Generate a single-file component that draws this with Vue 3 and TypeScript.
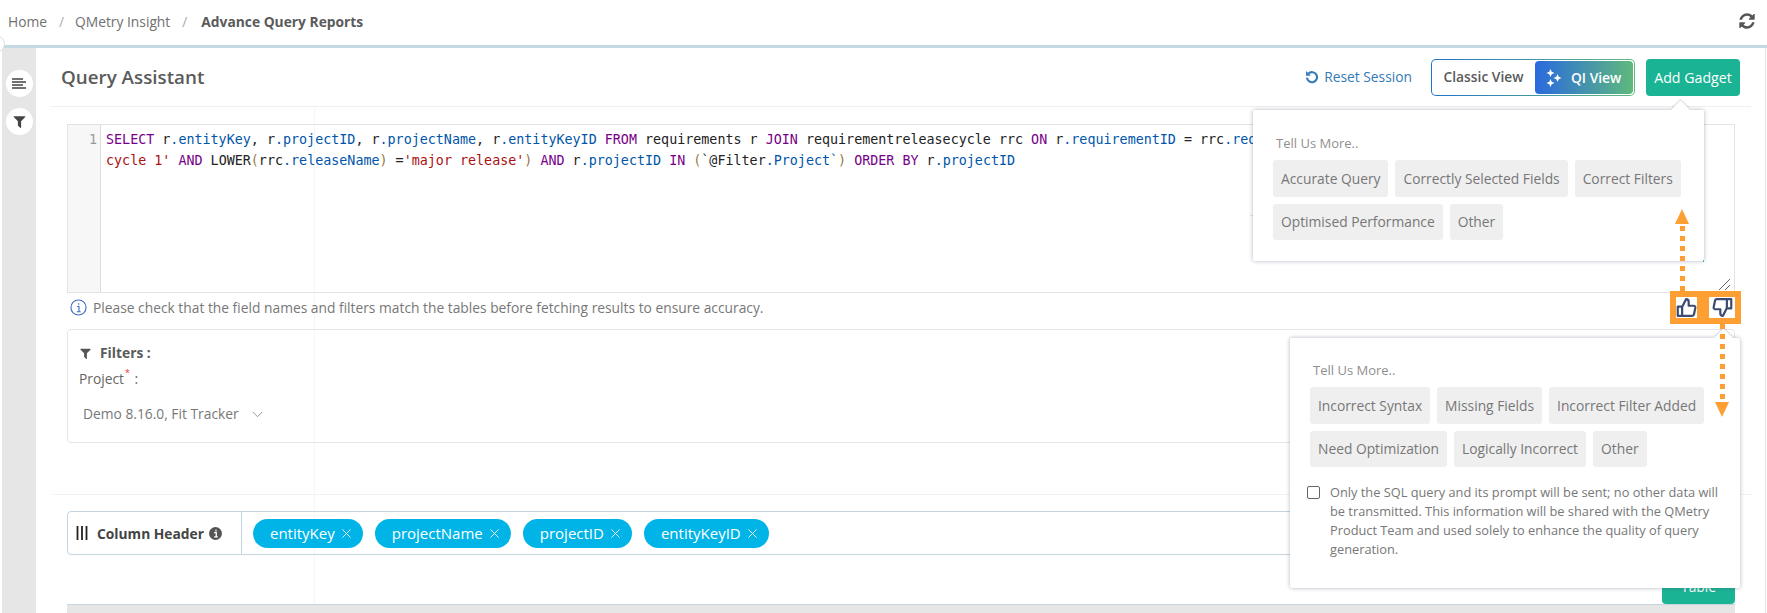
<script setup lang="ts">
type Tok = { t: string; c: string }
const k = (t: string): Tok => ({ t, c: 'kw' })
const v = (t: string): Tok => ({ t, c: 'prop' })
const n = (t: string): Tok => ({ t, c: 'plain' })
const s = (t: string): Tok => ({ t, c: 'str' })
const b = (t: string): Tok => ({ t, c: 'brk' })

const line1: Tok[] = [
  k('SELECT'), n(' r'), v('.entityKey'), n(', r'), v('.projectID'), n(', r'), v('.projectName'), n(', r'), v('.entityKeyID'),
  n(' '), k('FROM'), n(' requirements r '), k('JOIN'), n(' requirementreleasecycle rrc '), k('ON'), n(' r'), v('.requirementID'),
  n(' = rrc'), v('.requirementID'), n(' '), k('WHERE'), n(' (LOWER(rrc'), v('.cycleName'), n(') ='), s("'test")
]
const line2: Tok[] = [
  s("cycle 1'"), n(' '), k('AND'), n(' LOWER'), b('('), n('rrc'), v('.releaseName'), b(')'), n(' ='), s("'major release'"), b(')'),
  n(' '), k('AND'), n(' r'), v('.projectID'), n(' '), k('IN'), n(' '), b('('), n('`@Filter'), v('.Project`'), b(')'), n(' '), k('ORDER'), n(' '), k('BY'), n(' r'), v('.projectID')
]
const columns = ['entityKey', 'projectName', 'projectID', 'entityKeyID']
const upRows = [['Accurate Query', 'Correctly Selected Fields', 'Correct Filters'], ['Optimised Performance', 'Other']]
const downRows = [['Incorrect Syntax', 'Missing Fields', 'Incorrect Filter Added'], ['Need Optimization', 'Logically Incorrect', 'Other']]
const filterPath = 'M1595 295q17 41-14 70l-493 493v742q0 42-39 59-13 5-25 5-27 0-45-19l-256-256q-19-19-19-45v-486l-493-493q-31-29-14-70 17-39 59-39h1280q42 0 59 39z'
</script>

<template>
  <div class="page">
    <span class="edge-knob"></span>
    <nav class="crumbs">
      <span>Home</span><i>/</i><span>QMetry Insight</span><i>/</i><b>Advance Query Reports</b>
      <svg class="refresh" viewBox="0 0 1792 1792"><path fill="#555" d="M1639 1056q0 5-1 7-64 268-268 434.5t-478 166.5q-146 0-282.5-55t-243.5-157l-129 129q-19 19-45 19t-45-19-19-45v-448q0-26 19-45t45-19h448q26 0 45 19t19 45-19 45l-137 137q71 66 161 102t187 36q134 0 250-65t186-179q11-17 53-117 8-23 30-23h192q13 0 22.5 9.5t9.5 22.5zm25-800v448q0 26-19 45t-45 19h-448q-26 0-45-19t-19-45 19-45l138-138q-148-137-349-137-134 0-250 65t-186 179q-11 17-53 117-8 23-30 23h-199q-13 0-22.5-9.5t-9.5-22.5v-7q65-268 270-434.5t480-166.5q146 0 284 55.5t245 156.5l130-129q19-19 45-19t45 19 19 45z"/></svg>
    </nav>

    <div class="body">
      <aside class="rail">
        <span class="rail-btn">
          <svg viewBox="0 0 14 12" width="14" height="12"><path d="M0 1h11M0 4h14M0 7h11M0 10h14" stroke="#444" stroke-width="1.6"/></svg>
        </span>
        <span class="rail-btn">
          <svg viewBox="0 0 1792 1792" width="15" height="15"><path fill="#444" :d="filterPath"/></svg>
        </span>
      </aside>

      <main class="main">
        <span class="guide"></span>
        <header class="head">
          <h1>Query Assistant</h1>
          <a class="reset">
            <svg viewBox="0 0 16 16" width="14" height="14"><path d="M4 4A5.800 5.800 0 1 1 2.200 8.800" fill="none" stroke="#337ab7" stroke-width="2.400"/><path d="M1.200 1v5.600h5.600z" fill="#337ab7"/></svg>
            Reset Session
          </a>
          <div class="toggle">
            <span class="classic">Classic View</span>
            <span class="qi">
              <svg viewBox="0 0 16 18" width="16" height="18"><path fill="#fff" d="M4.500 0l1.200 2.800L8.500 4 5.700 5.200 4.500 8 3.300 5.200.5 4l2.800-1.200zM11.500 5l1.200 2.800L15.500 9l-2.800 1.200L11.500 13l-1.200-2.800L7.500 9l2.800-1.200zM4.500 10l1.200 2.800L8.500 14l-2.800 1.200L4.500 18l-1.200-2.800L.5 14l2.800-1.200z"/></svg>
              QI View
            </span>
          </div>
          <button class="add">Add Gadget</button>
        </header>

        <section class="content">
          <div class="editor">
            <div class="gutter">1</div>
            <pre class="code"><span v-for="(x, i) in line1" :key="'a' + i" :class="x.c">{{ x.t }}</span>
<span v-for="(x, i) in line2" :key="'b' + i" :class="x.c">{{ x.t }}</span></pre>
            <div class="prompt-back"></div>
            <svg class="grip" viewBox="0 0 12 11" width="12" height="11"><path d="M0 11L11 0M6 11l5-5" stroke="#666" fill="none"/></svg>
          </div>

          <div class="notice">
            <svg viewBox="0 0 18 18" width="17" height="17"><circle cx="9" cy="9" r="8" fill="none" stroke="#3f6fc0" stroke-width="1.200"/><path d="M7.500 8h2v5.500M7.200 13.500h4.200M9.200 4.600v1.600" fill="none" stroke="#3f6fc0" stroke-width="1.200"/></svg>
            <span>Please check that the field names and filters match the tables before fetching results to ensure accuracy.</span>
          </div>

          <div class="filters">
            <div class="f-title">
              <svg viewBox="0 0 1792 1792" width="13" height="13"><path fill="#555" :d="filterPath"/></svg>
              Filters :
            </div>
            <div class="f-label">Project<sup>*</sup> :</div>
            <div class="f-select">
              Demo 8.16.0, Fit Tracker
              <svg viewBox="0 0 12 8" width="11" height="7"><path d="M.5 1l5.500 5.500L11.500 1" fill="none" stroke="#888"/></svg>
            </div>
          </div>
        </section>

        <div class="rule"></div>

        <section class="content lower">
          <div class="colbox">
            <div class="col-label">
              <svg viewBox="0 0 12 14" width="12" height="14"><path d="M1.500 0v14M6 0v14M10.500 0v14" stroke="#222" stroke-width="1.800"/></svg>
              <b>Column Header</b>
              <svg viewBox="0 0 14 14" width="13" height="13"><circle cx="7" cy="7" r="7" fill="#555"/><path d="M5.500 6h2.300v4.500M5.500 10.700h4M7.500 3v1.800" stroke="#fff" stroke-width="1.400" fill="none"/></svg>
            </div>
            <div class="col-tags">
              <span v-for="c in columns" :key="c" class="tag">{{ c }}<svg viewBox="0 0 10 10" width="9" height="9"><path d="M.5.5l9 9M9.500.5l-9 9" stroke="#fff" stroke-width="1"/></svg></span>
            </div>
          </div>
          <div class="table-actions">
            <button class="table-btn">Table</button>
          </div>
          <div class="table-head"></div>
        </section>
      </main>
    </div>

    <div class="pop pop-up">
      <p>Tell Us More..</p>
      <div v-for="(row, i) in upRows" :key="i" class="chips">
        <span v-for="c in row" :key="c" class="chip">{{ c }}</span>
      </div>
    </div>

    <div class="pop pop-down">
      <p>Tell Us More..</p>
      <div v-for="(row, i) in downRows" :key="i" class="chips">
        <span v-for="c in row" :key="c" class="chip">{{ c }}</span>
      </div>
      <label class="consent">
        <span class="box"></span>
        <span>Only the SQL query and its prompt will be sent; no other data will be transmitted. This information will be shared with the QMetry Product Team and used solely to enhance the quality of query generation.</span>
      </label>
    </div>

    <span class="arrow arrow-up"></span>
    <span class="dots dots-up"></span>
    <span class="dots dots-down"></span>
    <span class="arrow arrow-down"></span>

    <div class="votes">
      <span class="vote up">
        <svg viewBox="0 0 24 24" width="21" height="21"><path d="M2 11h5v10.500H2zM7 11.500L11.500 2.500c1.800 0 3 1.200 3 3V10h5.800c1.200 0 2 1 1.800 2.200l-1.500 7.500c-.2 1.100-1 1.800-2.100 1.800H7" fill="none" stroke="#3b4b72" stroke-width="2.500" stroke-linejoin="round"/></svg>
      </span>
      <span class="vote down">
        <svg viewBox="0 0 24 24" width="21" height="21"><path d="M22 13h-5V2.500h5zM17 12.500L12.500 21.500c-1.800 0-3-1.200-3-3V14H3.700c-1.200 0-2-1-1.800-2.200l1.500-7.500c.2-1.100 1-1.800 2.100-1.800H17" fill="none" stroke="#3b4b72" stroke-width="2.500" stroke-linejoin="round"/></svg>
      </span>
    </div>
  </div>
</template>

<style>
html, body { margin: 0; padding: 0; background: #fff; }
</style>

<style scoped>
.page {
  position: relative;
  width: 1767px;
  height: 613px;
  overflow: hidden;
  background: #fff;
  font-family: "Open Sans", "Liberation Sans", sans-serif;
  font-size: 13.8px;
  color: #777;
  display: flex;
  flex-direction: column;
}
.edge-knob {
  position: absolute;
  left: -13px;
  top: 35px;
  width: 16px;
  height: 16px;
  border-radius: 50%;
  background: #fff;
  border: 1px solid #ddd;
  z-index: 2;
}
.crumbs {
  height: 48px;
  box-sizing: border-box;
  flex: none;
  border-bottom: 3px solid #c5d9e5;
  display: flex;
  align-items: center;
  padding: 0 11px 3px 8px;
  color: #707070;
}
.crumbs i { font-style: normal; color: #aaa; margin: 0 11px 0 12px; }
.crumbs b { color: #5a5a5a; font-weight: 700; margin-left: 3px; }
.refresh { margin-left: auto; width: 18px; height: 18px; }

.body { flex: 1; display: flex; min-height: 0; }
.rail {
  width: 34px;
  margin-left: 2px;
  flex: none;
  background: #e6e6e6;
  display: flex;
  flex-direction: column;
  align-items: center;
  gap: 11px;
  padding-top: 22px;
  box-sizing: border-box;
}
.rail-btn {
  width: 27px;
  height: 27px;
  border-radius: 50%;
  background: #fff;
  display: flex;
  align-items: center;
  justify-content: center;
}
.main {
  position: relative;
  flex: 1;
  min-width: 0;
  margin-right: 1px;
  border-right: 1px solid #e2e2e2;
}
.guide {
  position: absolute;
  left: 278px;
  top: 59px;
  bottom: 0;
  width: 1px;
  background: #f6f6f6;
}
.head {
  position: relative;
  height: 59px;
  box-sizing: border-box;
  margin: 0 14px 0 14px;
  padding: 11px 11px 0 11px;
  border-bottom: 1px solid #f0f0f0;
  display: flex;
  align-items: flex-start;
}
.head h1 {
  margin: 0 auto 0 0;
  font-size: 18.800px;
  font-weight: 600;
  line-height: 36px;
  color: #5a5a5a;
}
.reset {
  display: flex;
  align-items: center;
  gap: 5px;
  color: #337ab7;
  line-height: 36px;
  margin-right: 19px;
}
.toggle {
  width: 204px;
  height: 37px;
  box-sizing: border-box;
  border: 1px solid transparent;
  border-radius: 5px;
  background: linear-gradient(#fff, #fff) padding-box, linear-gradient(90deg, #1f74c9, #63b97f) border-box;
  display: flex;
  align-items: stretch;
  margin-right: 11px;
  font-weight: 600;
}
.classic { width: 103px; text-align: center; line-height: 33px; color: #5a5a5a; }
.qi {
  flex: 1;
  border-radius: 4px;
  background: linear-gradient(90deg, #2a6adf, #5eb97c);
  color: #fff;
  display: flex;
  align-items: center;
  gap: 9px;
  padding-left: 11px;
  margin: 1px 1px 1px 0;
}
.add {
  width: 94px;
  height: 37px;
  border: 0;
  padding: 0;
  border-radius: 4px;
  background: #1ab394;
  color: #fff;
  font: inherit;
  font-size: 14.200px;
}

.content { position: relative; z-index: 1; margin: 0 30px 0 31px; }
.editor {
  position: relative;
  margin-top: 17px;
  height: 169px;
  box-sizing: border-box;
  border: 1px solid #e3e3e3;
  display: flex;
}
.gutter {
  width: 33px;
  flex: none;
  box-sizing: border-box;
  background: #f7f7f7;
  border-right: 1px solid #ddd;
  text-align: right;
  padding: 4px 3px 0 0;
  font: 13.36px/21px "DejaVu Sans Mono", monospace;
  color: #999;
}
.code {
  margin: 0;
  padding: 4px 0 0 5px;
  font: 13.36px/21px "DejaVu Sans Mono", monospace;
  color: #333;
  white-space: pre;
  overflow: hidden;
}
.kw { color: #770088; }
.prop { color: #0055aa; }
.plain { color: #222; }
.str { color: #aa1111; }
.brk { color: #997744; }
.prompt-back {
  position: absolute;
  left: 1182px;
  right: 30px;
  top: 90px;
  height: 46px;
  border-top: 1px solid #e5e5e5;
  border-right: 1px solid #1ab394;
}
.grip { position: absolute; right: 3px; bottom: 2px; }

.notice {
  height: 36px;
  box-sizing: border-box;
  display: flex;
  align-items: flex-start;
  gap: 6px;
  padding: 6px 0 0 3px;
  line-height: 17px;
}
.filters {
  height: 114px;
  box-sizing: border-box;
  border: 1px solid #e5e5e5;
  border-radius: 4px;
  padding: 13px 11px;
}
.f-title { display: flex; align-items: center; gap: 8px; font-weight: 700; color: #5a5a5a; line-height: 20px; }
.f-label { line-height: 20px; margin-top: 6px; color: #666; }
.f-label sup { color: #e33; font-size: 9px; line-height: 0; position: relative; top: -2px; margin: 0 1px; }
.f-select { display: flex; align-items: center; gap: 13px; margin: 15px 0 0 4px; line-height: 20px; }

.rule { height: 1px; margin: 51px 13px 0 17px; background: #f2f2f2; }
.lower { padding-top: 16px; }
.colbox {
  height: 44px;
  box-sizing: border-box;
  border: 1px solid #c5d5e0;
  border-radius: 4px;
  display: flex;
}
.col-label {
  width: 174px;
  flex: none;
  box-sizing: border-box;
  border-right: 1px solid #c5d5e0;
  display: flex;
  align-items: center;
  padding-left: 8px;
  gap: 5px;
}
.col-label b { color: #444; font-weight: 700; margin-left: 4px; }
.col-tags { display: flex; align-items: center; gap: 12px; padding-left: 11px; }
.tag {
  height: 29px;
  line-height: 28px;
  border-radius: 15px;
  padding: 0 12px 0 17px;
  background: #00b4e8;
  color: #fff;
  font-size: 15px;
  display: flex;
  align-items: center;
  gap: 7px;
}
.table-actions { display: flex; justify-content: flex-end; margin-top: 13px; }
.table-btn {
  width: 73px;
  height: 36px;
  border: 0;
  padding: 0;
  border-radius: 0 0 4px 4px;
  background: #1ab394;
  color: #fff;
  font: inherit;
}
.table-head {
  height: 20px;
  background: #e6e6e6;
  border-top: 1px solid #c5d5e0;
}

.pop {
  position: absolute;
  box-sizing: border-box;
  background: #fff;
  border-radius: 2px;
  box-shadow: 0 0 4px rgba(60, 70, 100, .4);
  z-index: 3;
}
.pop::before {
  content: "";
  position: absolute;
  top: -7px;
  width: 13px;
  height: 13px;
  background: #fff;
  transform: rotate(45deg);
  box-shadow: -1px -1px 1px rgba(60, 70, 100, .2);
}
.pop p { margin: 0 0 8px 3px; font-size: 13px; line-height: 18px; color: #909090; }
.pop-up { left: 1253px; top: 110px; width: 451px; height: 151px; padding: 24px 20px; }
.pop-up::before { right: 17px; }
.pop-down { left: 1290px; top: 338px; width: 450px; height: 250px; padding: 23px 14px 23px 20px; }
.pop-down::before { right: 10px; }
.chips { display: flex; gap: 7px; margin-bottom: 7px; }
.chip {
  height: 37px;
  line-height: 37px;
  padding: 0 8px;
  background: #efefef;
  border-radius: 3px;
  color: #777;
  white-space: nowrap;
}
.chips + .chips .chip { height: 36px; line-height: 36px; }
.consent {
  display: flex;
  gap: 10px;
  margin: 16px 0 0 -3px;
  font-size: 12.800px;
  line-height: 19px;
  color: #777;
}
.box {
  width: 13px;
  height: 13px;
  box-sizing: border-box;
  flex: none;
  margin-top: 3px;
  border: 1px solid #666;
  border-radius: 2px;
}

.arrow { position: absolute; z-index: 5; width: 0; height: 0; border-left: 7.5px solid transparent; border-right: 7.5px solid transparent; }
.arrow-up { left: 1675px; top: 209px; border-bottom: 15px solid #fd9f33; }
.arrow-down { left: 1715px; top: 402px; border-top: 15px solid #fd9f33; }
.dots {
  position: absolute;
  z-index: 5;
  width: 5px;
  background: repeating-linear-gradient(180deg, #fd9f33 0 5px, transparent 5px 10px);
}
.dots-up { left: 1680px; top: 226px; height: 65px; }
.dots-down { left: 1720px; top: 324px; height: 76px; }
.votes {
  position: absolute;
  z-index: 6;
  left: 1670px;
  top: 291px;
  width: 71px;
  height: 33px;
  box-sizing: border-box;
  background: #fd9f33;
  padding: 6px;
  display: flex;
  justify-content: space-between;
}
.vote { height: 21px; background: #fff; display: flex; align-items: center; justify-content: center; }
.vote.up { width: 21px; }
.vote.down { width: 26px; }
</style>
